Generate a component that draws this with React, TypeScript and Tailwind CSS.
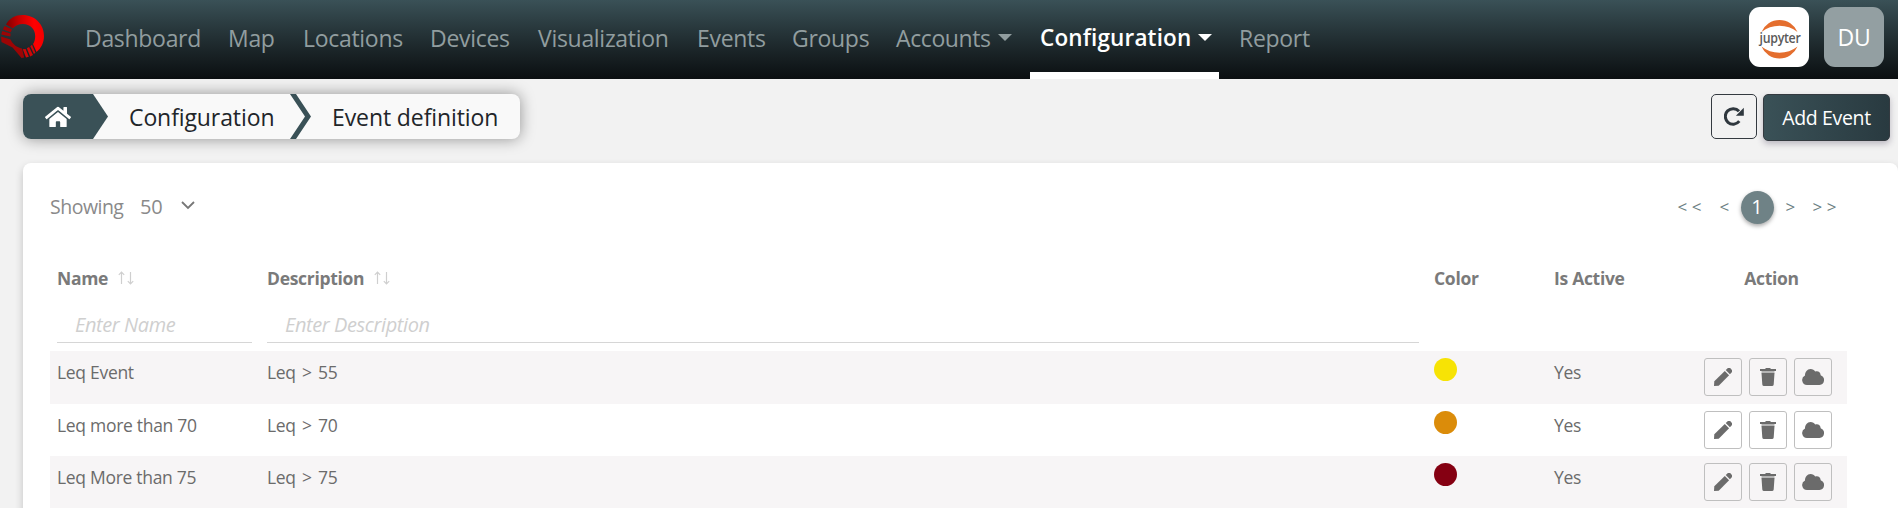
import React from 'react';
import { FaHome } from 'react-icons/fa';

const navItems = [
  { label: 'Dashboard', cell: 'w-[143px]' },
  { label: 'Map', cell: 'w-[75px]' },
  { label: 'Locations', cell: 'w-[127px]' },
  { label: 'Devices', cell: 'w-[108px]' },
  { label: 'Visualization', cell: 'w-[159px]' },
  { label: 'Events', cell: 'w-[95px]' },
  { label: 'Groups', cell: 'w-[104px]' },
];

const rows = [
  { name: 'Leq Event', description: 'Leq > 55', dot: 'bg-[#f7e305]' },
  { name: 'Leq more than 70', description: 'Leq > 70', dot: 'bg-[#db8c0a]' },
  { name: 'Leq More than 75', description: 'Leq > 75', dot: 'bg-[#850012]' },
];

const columns = 'grid grid-cols-[210px_1167px_120px_150px_150px] pl-[7px]';

function Logo() {
  return (
    <svg width="46" height="60" viewBox="0 0 46 60">
      <defs>
        <linearGradient id="ring" x1="0" y1="0.4" x2="1" y2="0.3">
          <stop offset="0" stopColor="#7d0000" />
          <stop offset="0.35" stopColor="#c40000" />
          <stop offset="0.75" stopColor="#ff0000" />
          <stop offset="1" stopColor="#f00000" />
        </linearGradient>
      </defs>
      <path fill="url(#ring)" d="M6 24.500C9.500 18 15.500 15 22.500 15 35 15 44 24.500 44 36c0 6.500-3 12.500-7.500 16L33 44c1.400-2 2.200-4.500 2.200-8 0-7-5-12-12.200-12-4.500 0-8 1.800-10.200 4.500z" />
      <g fill="#9c0505">
        <path d="M4.500 26l7.500 3.200-1.300 3L2.800 29.500z" />
        <path d="M2.300 31l8.300 2.400-.2 3.200L1.200 34.500z" />
        <path d="M1 36.600l9.600 3c2 4.500 6.400 8.200 11.400 8.900L24.200 57.500 21.500 58 12.500 47.500 1.500 42z" />
      </g>
      <g fill="#cf0808">
        <path d="M22.800 49.300l2.800-.4 3.200 7.800-2.800.7z" />
        <path d="M26.800 48.300l2.300-1.200 3.900 8-2.800 1.300z" />
        <path d="M30.300 46.300l1.700-1.600 3.400 8-1.500 1.400z" />
      </g>
    </svg>
  );
}

function Caret() {
  return (
    <svg className="mb-px" width="14" height="7" viewBox="0 0 14 7" fill="currentColor">
      <path d="M0 0h14L7 7z" />
    </svg>
  );
}

function Jupyter() {
  return (
    <svg width="60" height="60" viewBox="0 0 60 60">
      <g fill="#e46e2e">
        <path d="M12.500 25a19.500 19.500 0 0 1 36 0A29 29 0 0 0 12.500 25z" />
        <path d="M12.500 39.500a19.500 19.500 0 0 0 36 0A29 29 0 0 1 12.500 39.500z" />
      </g>
      <text x="10.500" y="35.500" textLength="41" lengthAdjust="spacingAndGlyphs" fontSize="14" fontFamily="Open Sans, sans-serif" fontWeight="600" fill="#5a5a5a">jupyter</text>
    </svg>
  );
}

function RefreshIcon() {
  return (
    <svg width="20" height="19" viewBox="0 0 20 19" fill="none">
      <path d="M15.300 14.200A7.800 7.800 0 1 1 15 4.300" stroke="#2f373e" strokeWidth="3" />
      <path d="M19.800.8v8H11.900z" fill="#2f373e" />
    </svg>
  );
}

function SortIcon() {
  return (
    <svg width="16" height="14" viewBox="0 0 16 14" fill="none" stroke="#cfcfcf" strokeWidth="1.200">
      <path d="M3.500 13V1.200M.8 3.900l2.700-2.700 2.700 2.700M12.500 1v11.800M9.800 10.100l2.700 2.700 2.700-2.700" />
    </svg>
  );
}

function PencilIcon() {
  return (
    <svg width="18" height="18" viewBox="0 0 18 18" fill="#6b6b6b">
      <path d="M0 18l.3-4.700L10.800 2.900l4.300 4.300L4.700 17.700z" />
      <path d="M11.700 2.100l1.200-1.200a2.900 2.900 0 0 1 4.200 4.200L15.900 6.300z" />
    </svg>
  );
}

function TrashIcon() {
  return (
    <svg width="16" height="18" viewBox="0 0 16 18">
      <path d="M1.500 3h13v2.200h-13z" fill="#b4b4b4" />
      <path d="M0 1h5l1-1h4l1 1h5v2H0zM1.500 5h13l-.8 11.500q-.2 1.500-1.700 1.500H4q-1.500 0-1.700-1.500z" fill="#6b6b6b" />
    </svg>
  );
}

function CloudIcon() {
  return (
    <svg width="22" height="16" viewBox="0 0 22 16" fill="#6b6b6b">
      <path d="M5 16A5 5 0 0 1 3 6.500C3 3 5.200 0 8.500 0c2.200 0 3.800 1 4.700 2.600 2.600-1 5.300.4 5.500 3.700A5 5 0 0 1 17.500 16z" />
    </svg>
  );
}

function ActionButton({ children }: { children: React.ReactNode }) {
  return (
    <button className="flex h-[38px] w-[38px] items-center justify-center rounded-[3px] border border-[#bfbfbf]">
      {children}
    </button>
  );
}

export default function App() {
  return (
    <div className="h-[508px] overflow-hidden bg-[#f2f2f2] font-['Open_Sans','Noto_Sans',sans-serif]">
      <header className="flex h-[79px] bg-linear-to-b from-[#3a5157] to-[#0b0f11] text-[23px] tracking-[-0.3px] text-[#919d9f]">
        <div className="w-[85px] shrink-0"><Logo /></div>
        <nav className="flex flex-1 leading-[76px]">
          {navItems.map((item) => (
            <a key={item.label} className={item.cell}>{item.label}</a>
          ))}
          <a className="flex h-[76px] w-[134px] items-center gap-[7px] tracking-[-0.4px]">Accounts<Caret /></a>
          <a className="flex h-[79px] w-[189px] items-center gap-[7px] border-b-[7px] border-white pt-[4px] pl-[10px] text-[22.500px] font-semibold tracking-[0.15px] text-white">
            Configuration<Caret />
          </a>
          <a className="pl-[20px]">Report</a>
        </nav>
        <div className="mr-[14px] flex gap-[15px] pt-[7px]">
          <div className="h-[60px] w-[60px] rounded-[11px] bg-white"><Jupyter /></div>
          <div className="flex h-[60px] w-[60px] items-center justify-center rounded-[11px] bg-[#939fa2] text-[23px] text-white">DU</div>
        </div>
      </header>

      <div className="flex h-[84px] justify-between pt-[15px] pr-2 pl-[23px]">
        <div className="flex h-[45px] w-[497px] overflow-hidden rounded-lg bg-[#f9f9f9] text-[23px] leading-[47px] tracking-[-0.1px] text-[#212529] shadow-[0_0_15px_rgba(0,0,0,0.4)]">
          <div className="flex h-[45px] w-[85px] items-center bg-[#3a5157] pl-[22px] text-[26px] text-white [clip-path:polygon(0_0,70px_0,85px_50%,70px_100%,0_100%)]">
            <FaHome />
          </div>
          <span className="w-[182px] pl-[21px]">Configuration</span>
          <svg width="21" height="45" viewBox="0 0 21 45" fill="#3a5157"><path d="M0 0h6l15 22.500L6 45H0l15-22.500z" /></svg>
          <span className="pl-[21px]">Event definition</span>
        </div>
        <div className="flex gap-[6px]">
          <button className="flex h-[45px] w-[46px] items-center justify-center rounded-[5px] border border-[#343a40]"><RefreshIcon /></button>
          <button className="h-[47px] w-[127px] rounded-[5px] border border-[#343a40] bg-linear-to-r from-[#3a5157] to-[#293a40] pt-px text-[19.500px] tracking-[-0.35px] text-white shadow-[0_3px_6px_rgba(60,50,80,0.3)]">Add Event</button>
        </div>
      </div>

      <main className="ml-[23px] h-[400px] rounded-lg bg-white pr-[51px] pl-[27px] shadow-[0_4px_8px_rgba(0,0,0,0.2)]">
        <div className="flex h-[88px] justify-between text-[20px] text-[#8a8a8a]">
          <div className="flex h-[88px] items-center">
            <span className="w-[90px] text-[19.500px] tracking-[-0.5px]">Showing</span>
            <span className="w-[41px] tracking-[-0.2px]">50</span>
            <svg className="mb-[3px]" width="14" height="9" viewBox="0 0 14 9" fill="none" stroke="#777" strokeWidth="1.800"><path d="M1 1l6 6 6-6" /></svg>
          </div>
          <div className="flex h-[88px] items-center pr-[6px] text-[17px] text-[#6c7f83]">
            <span className="w-[42px] tracking-[4.500px]">&lt;&lt;</span>
            <span className="w-[21px]">&lt;</span>
            <span className="flex h-[33px] w-[33px] items-center justify-center rounded-full bg-[#6f8286] text-[20px] text-white shadow-[0_2px_4px_rgba(0,0,0,0.35)]">1</span>
            <span className="w-[39px] pl-[12px]">&gt;</span>
            <span className="tracking-[4.500px]">&gt;&gt;</span>
          </div>
        </div>

        <div className={`${columns} h-[54px] items-center text-[17.500px] font-bold tracking-[-0.3px] text-[#7a7a7a]`}>
          <span className="flex items-center gap-[10px]">Name<SortIcon /></span>
          <span className="flex items-center gap-[10px]">Description<SortIcon /></span>
          <span>Color</span>
          <span>Is Active</span>
          <span className="pr-[15px] text-center">Action</span>
        </div>

        <div className={`${columns} h-[46px] text-[20px] tracking-[-0.4px] text-[#cfcfcf] italic`}>
          <div className="h-[38px] w-[195px] border-b border-[#d6d6d6] pl-[18px] leading-[40px]">Enter Name</div>
          <div className="h-[38px] w-[1152px] border-b border-[#d6d6d6] pl-[18px] leading-[40px]">Enter Description</div>
        </div>

        {rows.map((row) => (
          <div key={row.name} className={`${columns} h-[52.500px] pt-[7px] text-[17.500px] tracking-[-0.3px] text-[#6b6b6b] even:bg-[#f7f5f6]`}>
            <span className="leading-[28px]">{row.name}</span>
            <span className="leading-[28px] [word-spacing:2px]">{row.description}</span>
            <span className={`h-[23px] w-[23px] rounded-full ${row.dot}`} />
            <span className="leading-[28px]">Yes</span>
            <div className="flex gap-[7px]">
              <ActionButton><PencilIcon /></ActionButton>
              <ActionButton><TrashIcon /></ActionButton>
              <ActionButton><CloudIcon /></ActionButton>
            </div>
          </div>
        ))}
      </main>
    </div>
  );
}
